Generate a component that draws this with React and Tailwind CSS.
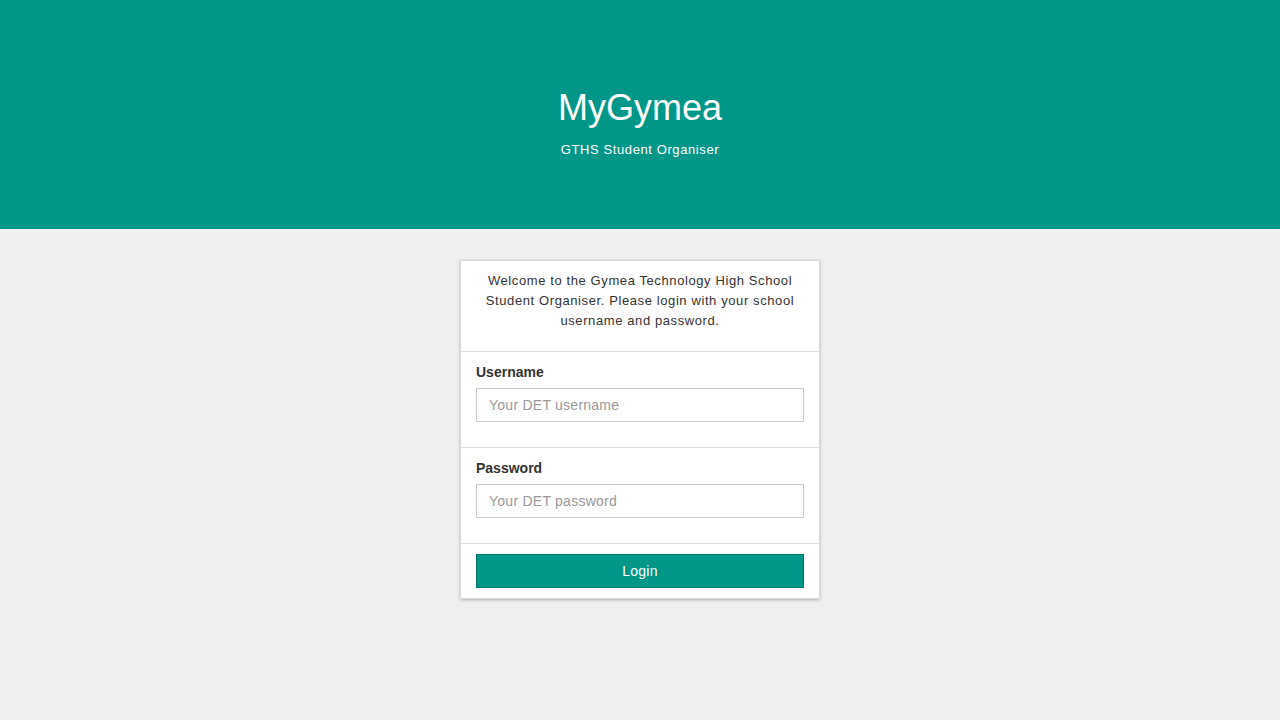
import React from 'react';

function Field({ label, type, placeholder }) {
  return (
    <div className="border-b border-[#ddd] px-[15px] pt-[10px] pb-[25px]">
      <label className="block text-[14px] leading-[20px] font-bold text-[#333] mb-[6px]">
        {label}
      </label>
      <input
        type={type}
        placeholder={placeholder}
        className="block w-full h-[34px] border border-[#ccc] bg-white px-3 text-[14px] tracking-[0.25px] text-[#555] placeholder:text-[#999] outline-none"
      />
    </div>
  );
}

export default function App() {
  return (
    <div className="min-h-screen bg-[#efefef] font-['Liberation_Sans',Arial,sans-serif] text-[#333]">
      <header className="h-[229px] bg-[#009688] flex flex-col items-center justify-center text-white">
        <h1 className="text-[36px] leading-[44px] font-normal mt-[16px]">MyGymea</h1>
        <p className="text-[13px] leading-[20px] mt-[10px] tracking-[0.6px]">GTHS Student Organiser</p>
      </header>

      <main className="flex justify-center pt-[31px]">
        <div className="w-[360px] bg-white border border-[#d8d8d8] shadow-[0_1px_3px_rgba(0,0,0,0.25)]">
          <div className="border-b border-[#ddd] px-[15px] pt-[10px] pb-[20px] text-center text-[13px] leading-[20px] tracking-[0.6px]">
            Welcome to the Gymea Technology High School Student Organiser. Please login with your school
            username and password.
          </div>
          <Field label="Username" type="text" placeholder="Your DET username" />
          <Field label="Password" type="password" placeholder="Your DET password" />
          <div className="px-[15px] py-[10px]">
            <button className="w-full h-[34px] bg-[#009688] border border-[#00796b] text-white text-[14px] tracking-[0.2px]">
              Login
            </button>
          </div>
        </div>
      </main>
    </div>
  );
}
